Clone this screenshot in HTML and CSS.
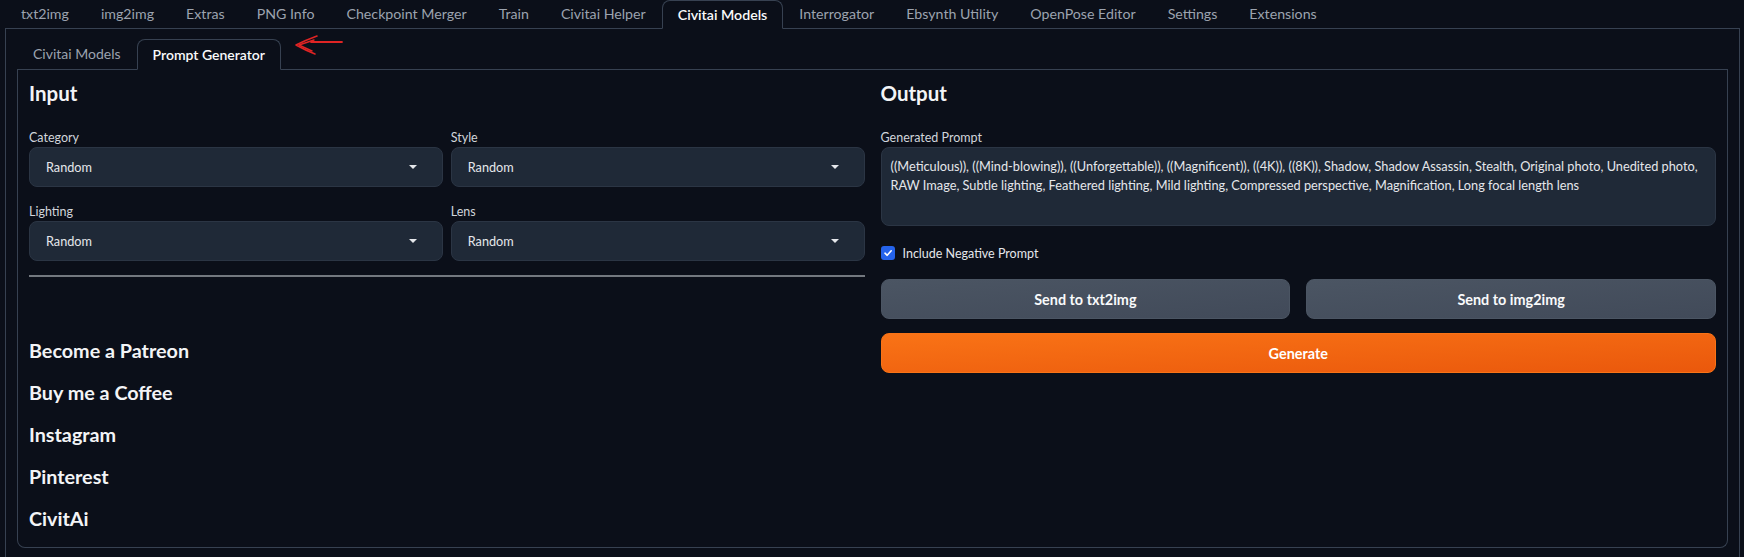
FILE: index.html
```html
<!DOCTYPE html>
<html lang="en">
<head>
<meta charset="utf-8">
<title>Prompt Generator</title>
<link rel="stylesheet" href="styles.css">
</head>
<body>
<div class="app">
  <nav class="tabnav mainnav">
    <span class="tab">txt2img</span>
    <span class="tab">img2img</span>
    <span class="tab">Extras</span>
    <span class="tab">PNG Info</span>
    <span class="tab">Checkpoint Merger</span>
    <span class="tab">Train</span>
    <span class="tab">Civitai Helper</span>
    <span class="tab tab-active">Civitai Models</span>
    <span class="tab">Interrogator</span>
    <span class="tab">Ebsynth Utility</span>
    <span class="tab">OpenPose Editor</span>
    <span class="tab">Settings</span>
    <span class="tab">Extensions</span>
  </nav>
  <section class="tabpanel">
    <nav class="tabnav subnav">
      <span class="tab">Civitai Models</span>
      <span class="tab tab-active">Prompt Generator</span>
      <svg class="annot-arrow" width="60" height="30" viewBox="0 0 60 30" aria-hidden="true">
        <path d="M27 3 Q16 7 6 12 Q15 17 25 21" fill="none" stroke="#e02424" stroke-width="1.6" stroke-linecap="round" stroke-linejoin="round"/>
        <path d="M24 7 Q15 10 9 12 Q15 15 22 18" fill="none" stroke="#e02424" stroke-width="1.4" stroke-linecap="round" stroke-linejoin="round"/>
        <path d="M21 9 L52 9" fill="none" stroke="#e02424" stroke-width="1.8" stroke-linecap="round"/>
      </svg>
    </nav>
    <div class="panel">
      <div class="col">
        <h2 class="heading">Input</h2>
        <div class="fields">
          <div class="field">
            <label class="label">Category</label>
            <div class="select"><span>Random</span><i class="caret"></i></div>
          </div>
          <div class="field">
            <label class="label">Style</label>
            <div class="select"><span>Random</span><i class="caret"></i></div>
          </div>
          <div class="field">
            <label class="label">Lighting</label>
            <div class="select"><span>Random</span><i class="caret"></i></div>
          </div>
          <div class="field">
            <label class="label">Lens</label>
            <div class="select"><span>Random</span><i class="caret"></i></div>
          </div>
        </div>
        <hr class="sep">
        <div class="links">
          <a class="link">Become a Patreon</a>
          <a class="link">Buy me a Coffee</a>
          <a class="link">Instagram</a>
          <a class="link">Pinterest</a>
          <a class="link">CivitAi</a>
        </div>
      </div>
      <div class="col">
        <h2 class="heading">Output</h2>
        <label class="label">Generated Prompt</label>
        <div class="textarea">((Meticulous)), ((Mind-blowing)), ((Unforgettable)), ((Magnificent)), ((4K)), ((8K)), Shadow, Shadow Assassin, Stealth, Original photo, Unedited photo, RAW Image, Subtle lighting, Feathered lighting, Mild lighting, Compressed perspective, Magnification, Long focal length lens</div>
        <div class="check-row">
          <span class="checkbox"><svg width="10" height="10" viewBox="0 0 10 10"><path d="M2 5.2 L4.2 7.3 L8.2 2.8" fill="none" stroke="#fff" stroke-width="1.6" stroke-linecap="round" stroke-linejoin="round"/></svg></span>
          <span class="check-label">Include Negative Prompt</span>
        </div>
        <div class="btn-row">
          <button class="btn btn-secondary">Send to txt2img</button>
          <button class="btn btn-secondary">Send to img2img</button>
        </div>
        <button class="btn btn-primary">Generate</button>
      </div>
    </div>
  </section>
</div>
</body>
</html>
```
FILE: styles.css
```css
* { box-sizing: border-box; }
html, body { margin: 0; padding: 0; background: #0b0f19; }
body {
  font-family: "Lato", "Liberation Sans", sans-serif;
  color: #e5e7eb;
  overflow: hidden;
  height: 557px;
}
.app { padding: 0 4px 0 5px; }

.tabnav {
  display: flex;
  align-items: flex-end;
  height: 29px;
  border-bottom: 1px solid #374151;
  position: relative;
}
.tab {
  display: block;
  height: 28px;
  line-height: 28px;
  padding: 0 16px;
  font-size: 14px;
  color: #9ca3af;
  white-space: nowrap;
}
.mainnav .tab { font-size: 14.2px; }
.tab-active {
  height: 29px;
  margin-bottom: -1px;
  padding: 0 15px;
  line-height: 27px;
  border: 1px solid #374151;
  border-bottom-color: #0b0f19;
  border-radius: 8px 8px 0 0;
  color: #f9fafb;
  font-weight: 600;
  background: #0b0f19;
}

.tabpanel {
  border: 1px solid #374151;
  border-top: none;
  padding: 10px 11px 11px 11px;
}
.subnav { height: 31px; }
.subnav .tab { height: 30px; line-height: 30px; }
.subnav .tab-active { height: 31px; line-height: 29px; }

.annot-arrow {
  position: absolute;
  left: 273px;
  top: -6px;
}

.panel {
  border: 1px solid #374151;
  border-top: none;
  border-radius: 0 0 8px 8px;
  padding: 9px 11px 14px 11px;
  display: flex;
  gap: 16px;
}
.col {
  flex: 1 1 0;
  min-width: 0;
  display: flex;
  flex-direction: column;
}
.heading {
  margin: 0 0 22px 0;
  height: 28px;
  line-height: 28px;
  font-size: 20.5px;
  font-weight: 700;
  color: #f3f4f6;
}
.label {
  display: block;
  height: 18px;
  line-height: 18px;
  font-size: 12.5px;
  color: #d1d5db;
}
.fields {
  display: grid;
  grid-template-columns: 1fr 1fr;
  column-gap: 8px;
  row-gap: 16px;
}
.select {
  height: 40px;
  display: flex;
  align-items: center;
  justify-content: space-between;
  padding: 0 25px 0 16px;
  background: #1f2937;
  border: 1px solid #2b3544;
  border-radius: 8px;
  font-size: 12.7px;
  color: #e5e7eb;
}
.caret {
  display: block;
  width: 0;
  height: 0;
  border-left: 4px solid transparent;
  border-right: 4px solid transparent;
  border-top: 4px solid #e5e7eb;
}
.sep {
  margin: 14px 0 0 0;
  border: none;
  height: 2px;
  background: #73787f;
}
.links {
  margin-top: 60px;
  display: flex;
  flex-direction: column;
  gap: 14px;
}
.link {
  display: block;
  height: 28px;
  line-height: 28px;
  font-size: 19.75px;
  font-weight: 700;
  color: #f3f4f6;
}

.textarea {
  height: 79px;
  padding: 9px 9px;
  background: #1f2937;
  border: 1px solid #2b3544;
  border-radius: 8px;
  font-size: 12.75px;
  line-height: 19px;
  color: #e5e7eb;
}
.check-row {
  margin-top: 17px;
  height: 20px;
  display: flex;
  align-items: center;
  gap: 8px;
}
.checkbox {
  width: 14px;
  height: 14px;
  border-radius: 3px;
  background: #2563eb;
  display: flex;
  align-items: center;
  justify-content: center;
}
.check-label {
  font-size: 12.5px;
  color: #e5e7eb;
}
.btn-row {
  margin-top: 16px;
  display: flex;
  gap: 16px;
}
.btn {
  display: block;
  height: 40px;
  border-radius: 8px;
  font-family: "Lato", "Liberation Sans", sans-serif;
  font-size: 14.4px;
  font-weight: 700;
  color: #f9fafb;
  cursor: pointer;
}
.btn-secondary {
  flex: 1 1 0;
  border: 1px solid #4b5563;
  background: linear-gradient(to bottom right, #4b5563, #414a59);
}
.btn-primary {
  margin-top: 14px;
  width: 100%;
  border: 1px solid #f97316;
  background: linear-gradient(to bottom right, #f97316, #ea580c);
  color: #ffffff;
}
```
